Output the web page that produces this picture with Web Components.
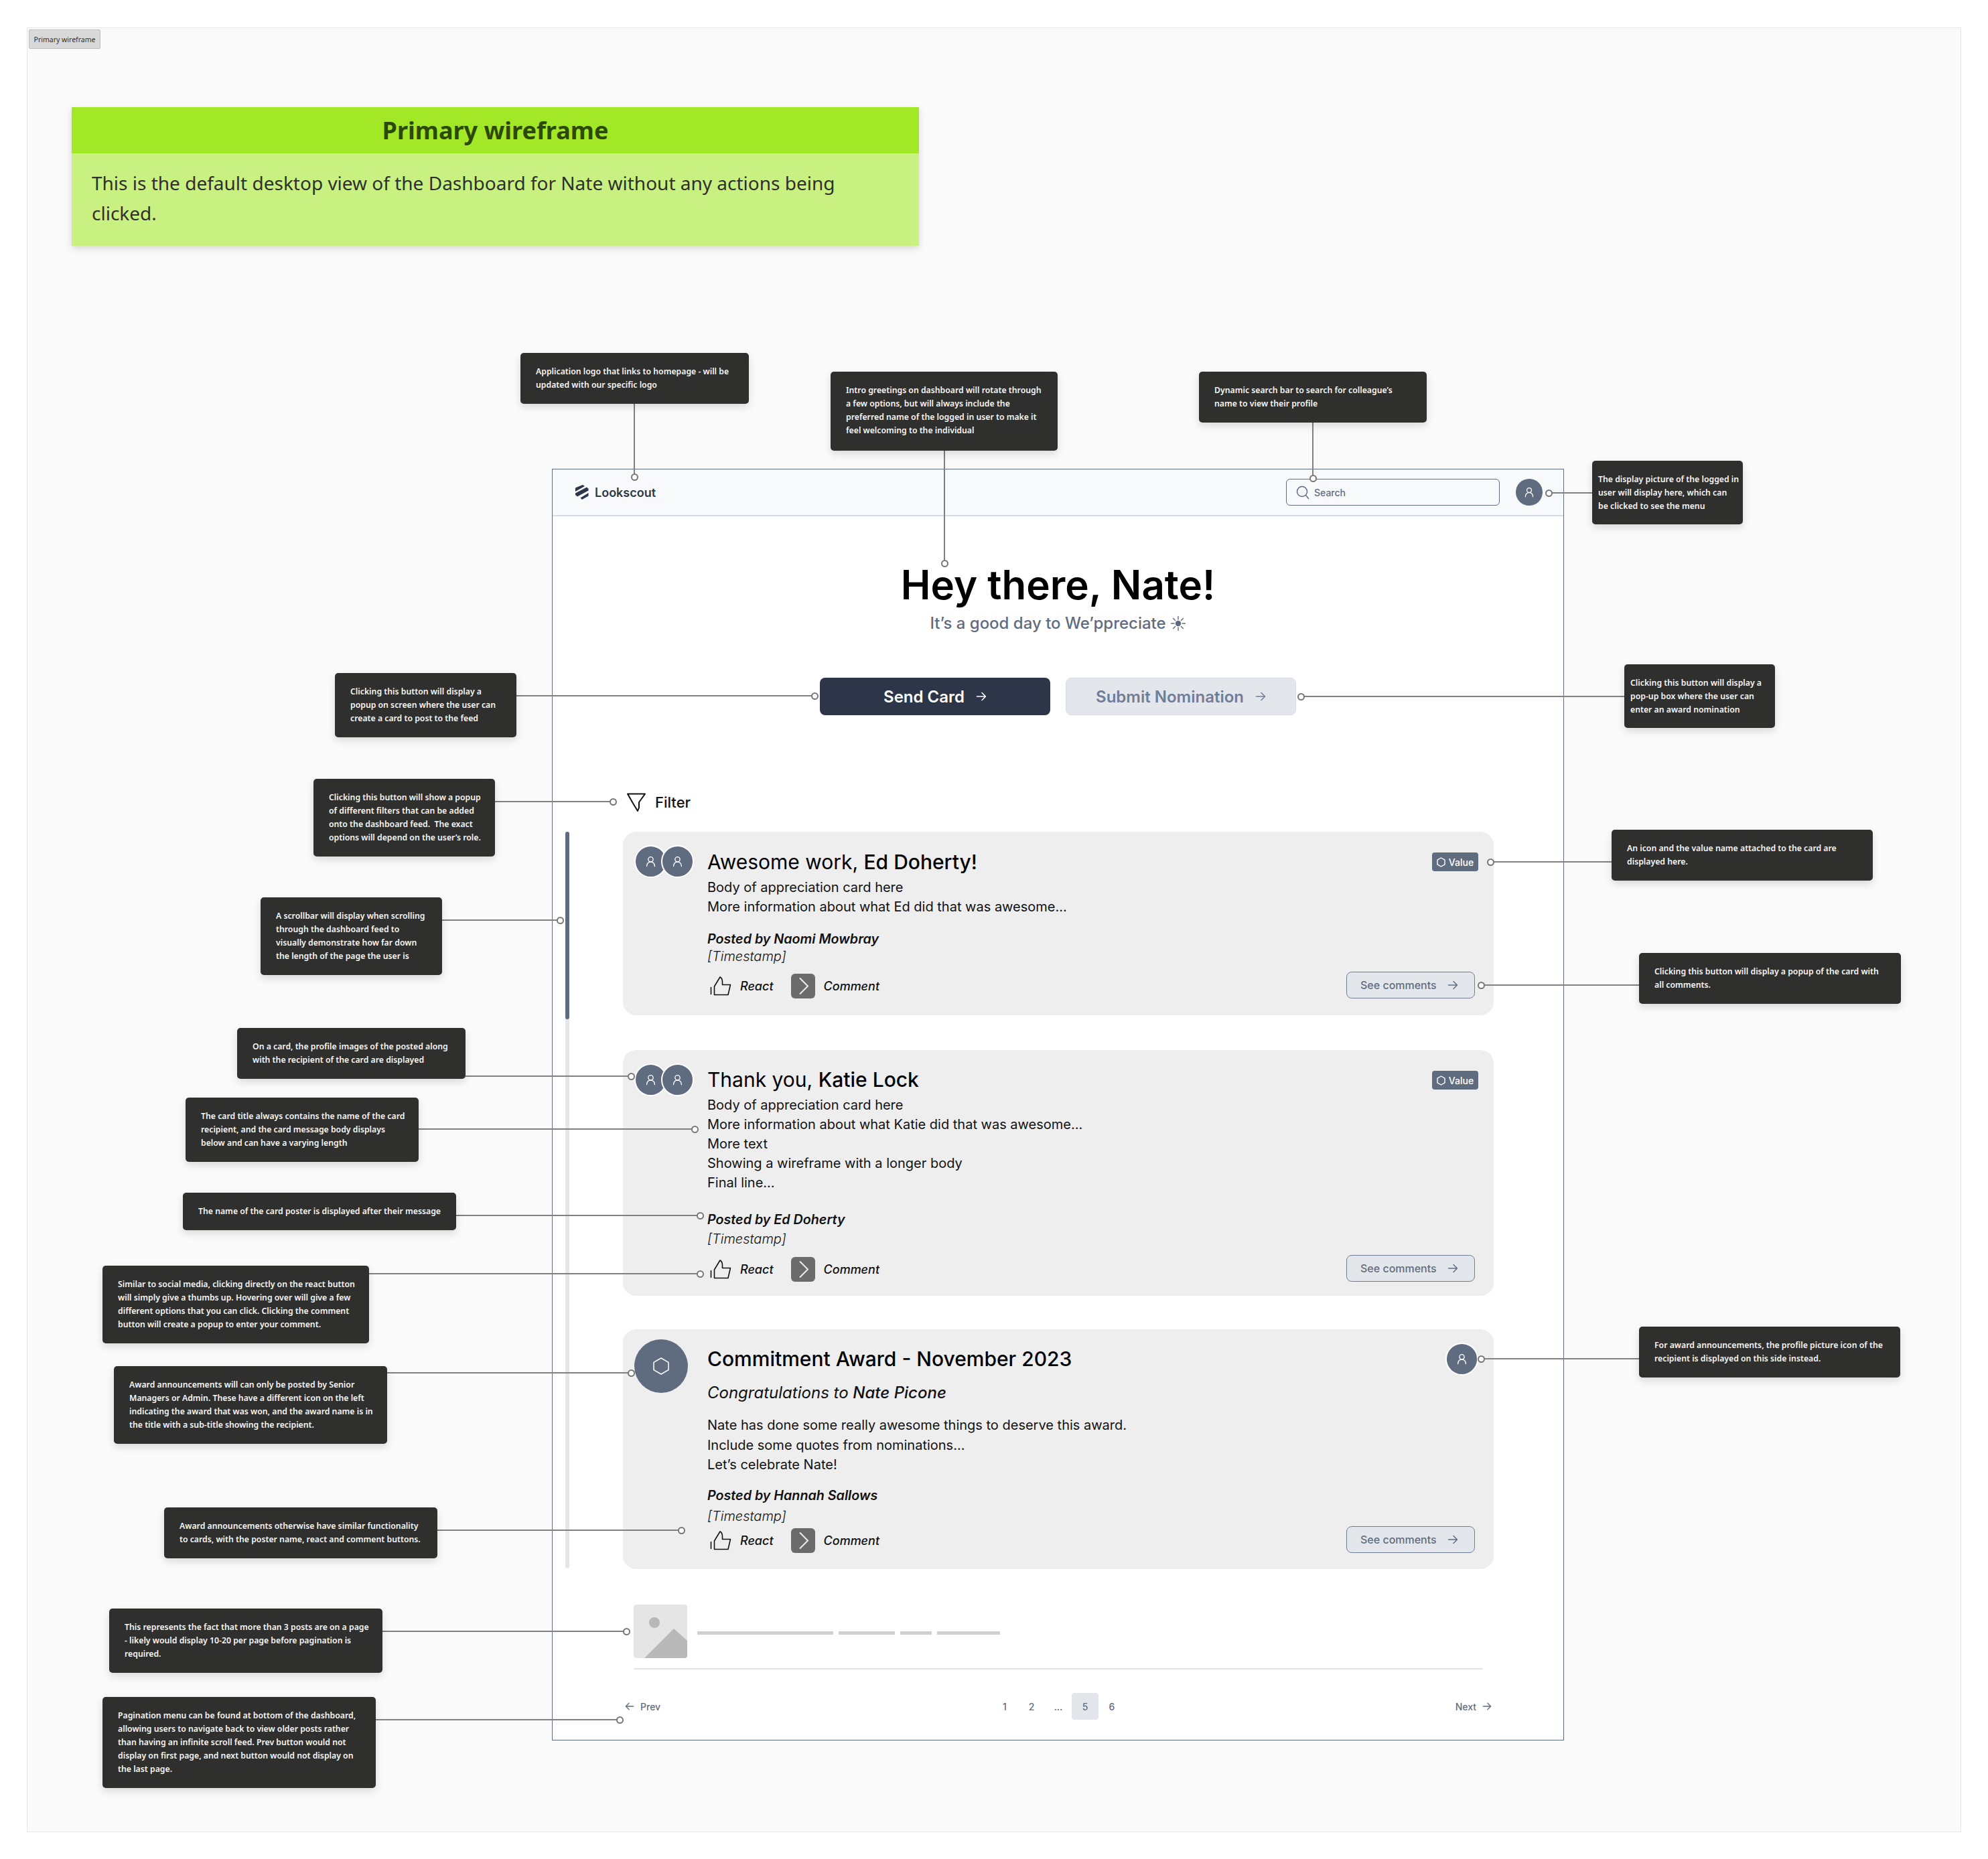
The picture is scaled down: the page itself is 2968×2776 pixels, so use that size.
<!DOCTYPE html>
<html lang="en"><head><meta charset="utf-8"><title>Primary wireframe</title>
<style>
html,body{margin:0;padding:0;background:#fff}
body{font-family:"Inter","Liberation Sans",sans-serif;width:2968px;height:2776px;overflow:hidden}
strong{font-weight:500}
</style></head>
<body>
<script>
function def(name, html, init){
  const t=document.createElement('template');t.innerHTML=html;
  customElements.define(name,class extends HTMLElement{
    constructor(){super();this.attachShadow({mode:'open'}).appendChild(t.content.cloneNode(true));}
    connectedCallback(){ if(init) init(this); }
  });
}
const ARROW='<svg width="16" height="16" viewBox="0 0 16 16" fill="none" stroke="currentColor" stroke-width="1.5" stroke-linecap="round" stroke-linejoin="round"><path d="M1.5 8h13M9 2.5 14.5 8 9 13.5"/></svg>';
const PERSON='<svg viewBox="0 0 24 24" fill="none" stroke="#fff" stroke-width="1.7" stroke-linecap="round"><circle cx="12" cy="8" r="4.6"/><path d="M4.5 21c.3-5 3-8.2 7.500-8.200s7.200 3.200 7.500 8.200"/></svg>';

def('a-board',`<style>:host{display:block;position:relative;width:2968px;height:2776px;overflow:hidden}
.f{position:absolute;left:40px;top:41px;width:2888px;height:2695px;box-sizing:border-box;background:#fafafa;border:1px solid #e6e6e6}</style><div class="f"></div><slot></slot>`);

def('a-tag',`<style>:host{position:absolute;left:43px;top:44px;width:107px;height:29px;box-sizing:border-box;display:flex;align-items:center;justify-content:center;background:#d9d9d9;border:1px solid #bdbdbd;border-radius:2px;font:400 10.5px "Noto Sans",sans-serif;color:#2f2f2d;white-space:nowrap;overflow:hidden}</style><slot></slot>`);

def('a-banner',`<style>:host{position:absolute;left:107px;top:160px;width:1265px;display:block;box-shadow:0 4px 10px rgba(0,0,0,.14);font-family:"Noto Sans",sans-serif}
.h{height:69px;background:#a3e827;display:flex;align-items:center;justify-content:center;font-size:36px;font-weight:700;color:#2c4a06}
.b{height:138px;box-sizing:border-box;background:#c9f181;padding:22px 30px 0;font-size:28px;line-height:45px;color:#2f2f2d}</style>
<div class="h"><slot name="head"></slot></div><div class="b"><slot></slot></div>`);

def('a-note',`<style>:host{position:absolute;left:var(--x);top:var(--y);width:var(--w);height:var(--h);box-sizing:border-box;padding:18px var(--p,23px);background:#2f2f2d;border-radius:5px;box-shadow:0 5px 12px rgba(0,0,0,.13);color:#f6f6f6;font:600 12.25px/20px "Noto Sans",sans-serif;white-space:nowrap;z-index:3}</style><slot></slot>`);

def('a-wire',`<style>:host{position:absolute;display:block;background:#808080;z-index:2}
:host([dir-r]){left:var(--a);width:calc(var(--b) - var(--a));top:calc(var(--y) - 1px);height:2px}
:host([dir-l]){left:var(--a);width:calc(var(--b) - var(--a));top:calc(var(--y) - 1px);height:2px}
:host([dir-v]){left:calc(var(--y) - 1px);top:var(--a);height:calc(var(--b) - var(--a));width:2px}
i{position:absolute;width:11px;height:11px;box-sizing:border-box;border:2px solid #777;border-radius:50%;background:#fff}
:host([dir-r]) i{right:-5.5px;top:-4.5px}
:host([dir-l]) i{left:-5.5px;top:-4.5px}
:host([dir-v]) i{bottom:-5.5px;left:-4.5px}</style><i></i>`);

def('a-frame',`<style>:host{position:absolute;left:824px;top:700px;width:1511px;height:1899px;box-sizing:border-box;display:flex;flex-direction:column;background:#fff;border:1px solid #5f6c7f;z-index:1;font-family:"Inter","Liberation Sans",sans-serif}</style><slot></slot>`);

def('a-logo',`<style>:host{display:flex;align-items:center;gap:9px;font:600 18px "Inter",sans-serif;color:#2d3648}svg{display:block}</style>
<svg width="20" height="22" viewBox="0 0 20 22" fill="#2d3648"><path d="M0 4.500 11 0l3 2L0 10zM0 12.500 17 3.500 19.500 6v2.500L3 17.500 0 15zM7.500 19.500 19.500 12v4.500L10 22z"/></svg><span><slot></slot></span>`);

def('a-search',`<style>:host{display:flex;align-items:center;gap:7px;width:319px;height:40px;box-sizing:border-box;padding-left:14px;border:1px solid #5f6c7f;border-radius:6px;background:#f8f9fb;font:500 14px "Inter",sans-serif;color:#5f6c7f}svg{display:block}</style>
<svg width="20" height="22" viewBox="0 0 20 22" fill="none" stroke="#5f6c7f" stroke-width="1.500" stroke-linecap="round"><circle cx="9" cy="10" r="7.500"/><path d="m14.500 15.500 4 5"/></svg><span><slot></slot></span>`);

def('a-avatar',`<style>:host{display:flex;align-items:center;justify-content:center;width:var(--s,49px);height:var(--s,49px);box-sizing:border-box;border-radius:50%;background:#5f6c7f;border:var(--bw,2px) solid #fff;flex:none}svg{width:var(--i,19px);height:var(--i,19px);display:block}</style>${PERSON}`);

def('a-topbar',`<style>:host{height:70px;flex:none;box-sizing:border-box;display:flex;align-items:center;background:#f8f9fb;border-bottom:2px solid #d5dbe5;padding:0 31px 0 34px}
.s{flex:1}::slotted(a-avatar){margin-left:24px}</style><slot name="left"></slot><div class="s"></div><slot></slot>`);

def('a-hero',`<style>:host{display:block;text-align:center;margin-top:66px;flex:none}
.h{font:600 60px/72px "Inter",sans-serif;color:#000}.s{font:500 24px/44px "Inter",sans-serif;color:#5f6c7f;display:flex;justify-content:center;align-items:center;gap:6px}</style>
<div class="h"><slot name="head"></slot></div><div class="s"><span><slot></slot></span>
<svg width="24" height="24" viewBox="0 0 24 24" fill="#5f6c7f" stroke="#5f6c7f" stroke-width="1.400" stroke-linecap="round"><circle cx="12" cy="12" r="3.500"/><path d="M12 1.500v4.500M12 18v4.500M1.500 12H6M18 12h4.500M4.600 4.600l3 3M16.400 16.400l3 3M19.400 4.600l-3 3M7.600 16.400l-3 3"/></svg></div>`);

def('a-actionbar',`<style>:host{display:flex;justify-content:center;gap:23px;margin-top:59px;flex:none}</style><slot></slot>`);
def('a-btn',`<style>:host{display:flex;align-items:center;justify-content:center;gap:17px;width:344px;height:56px;box-sizing:border-box;border-radius:8px;font:600 24px "Inter",sans-serif;background:#2d3648;color:#fff}
:host([soft]){background:#e3e7ec;color:#717d96;border:1px solid #d8dde4}svg{display:block}</style><span><slot></slot></span>${ARROW}`);

def('a-filter',`<style>:host{display:flex;align-items:center;gap:14px;height:28px;margin:116px 0 0 111px;font:500 22px "Inter",sans-serif;color:#111;flex:none}svg{display:block}</style>
<svg width="28" height="28" viewBox="0 0 28 28" fill="none" stroke="#111" stroke-width="2" stroke-linejoin="round"><path d="M1 1.500h26L18 14v8l-2 5-7-11.500z"/></svg><span><slot></slot></span>`);

def('a-feed',`<style>:host{display:flex;gap:80px;margin:30px 0 0 19px;flex:none}
.t{width:6px;flex:none;border-radius:3px;background:#e3e7ec;margin-bottom:1px}.th{height:280px;border-radius:3px;background:#5f6c7f}
.c{width:1300px}</style><div class="t"><div class="th"></div></div><div class="c"><slot></slot></div>`);

def('a-thumb',`<style>:host{display:block;flex:none}svg{display:block}</style><svg width="32" height="29" viewBox="0 0 32 29" fill="none" stroke="#111" stroke-width="1.600" stroke-linejoin="round" stroke-linecap="round"><path d="M1.500 16.500v10M6.500 15 15 1c2.500 1.500 3.500 4 3.500 7v4.500h12L27 27.500H6.500z"/></svg>`);

def('a-post',`<style>:host{display:flex;background:#eee;border-radius:20px;margin-top:var(--mt,0);font-family:"Inter",sans-serif;color:#111}
.l{width:109px;margin-left:17px;flex:none;padding-top:var(--lt,20px);box-sizing:content-box}
.m{flex:1;padding-top:var(--t,25px);padding-bottom:var(--pb,25px)}
.title{font-size:30px;line-height:40px;font-weight:400;color:#000}
:host([award]) .title{font-weight:500}
.sub{display:none;font-size:24px;line-height:36px;font-style:italic;margin-top:13px}
:host([award]) .sub{display:block}
.body{font-size:20px;line-height:var(--lh,29px);margin-top:var(--bg,3.500px);white-space:pre-line}
.by{font-size:19.700px;line-height:26px;font-style:italic;font-weight:600;margin-top:var(--byg,20.500px)}
.stamp{font-size:20px;line-height:26px;font-style:italic;font-weight:300;margin-top:var(--sg,0)}
.acts{display:flex;align-items:center;height:38px;margin-top:var(--ag,12px);margin-left:4px;font-size:18px;font-style:italic;font-weight:500}
.acts span{margin:0 26px 0 13px}.acts span:last-child{margin-right:0}svg{display:block}
.a{flex:none;display:flex;flex-direction:column;align-items:flex-end;justify-content:space-between;padding:var(--at,31px) 23px var(--pb,25px) 0}
.see{display:flex;align-items:center;gap:16px;width:192px;height:40px;box-sizing:border-box;padding-left:20px;margin-right:5px;background:#e3e7ec;border:1px solid #717d96;border-radius:8px;font-size:16px;font-weight:500;color:#5f6c7f}</style>
<div class="l"><slot name="lead"></slot></div>
<div class="m"><div class="title"><slot name="title"></slot></div><div class="sub"><slot name="sub"></slot></div>
<div class="body"><slot name="body"></slot></div><div class="by"><slot name="by"></slot></div><div class="stamp"><slot name="stamp"></slot></div>
<div class="acts"><a-thumb></a-thumb><span>React</span>
<svg width="36" height="37" viewBox="0 0 36 37"><rect width="36" height="37" rx="6" fill="#6b6b6b"/><path d="M13 6.500 25 18.500 13 30.500" fill="none" stroke="#eee" stroke-width="2"/></svg><span>Comment</span></div></div>
<div class="a"><slot name="top"></slot><div class="see"><span>See comments</span>${ARROW}</div></div>`);

def('a-pair',`<style>:host{display:flex}::slotted(a-avatar:last-child){margin-left:-9px}</style><slot></slot>`);

def('a-value',`<style>:host{display:flex;align-items:center;justify-content:center;gap:5px;width:69px;height:28px;border-radius:4px;background:#5f6c7f;color:#fff;font:500 14px "Inter",sans-serif}svg{display:block}</style>
<svg width="13" height="15" viewBox="0 0 13 15" fill="none" stroke="#fff" stroke-width="1.400"><path d="M6.500 1 12 4.200v6.600L6.500 14 1 10.800V4.200z"/></svg><span><slot></slot></span>`);

def('a-medal',`<style>:host{display:flex;align-items:center;justify-content:center;width:80px;height:80px;border-radius:50%;background:#5f6c7f}svg{display:block}</style>
<svg width="24" height="26" viewBox="0 0 24 26" fill="none" stroke="#fff" stroke-width="1.500" stroke-linejoin="round"><path d="M12 1 23 7.300v11.400L12 25 1 18.700V7.300z"/></svg>`);

def('a-more',`<style>:host{display:flex;align-items:center;gap:15px;margin:53px 0 0 121px;flex:none}
.p{width:80px;height:80px;flex:none;display:block}
.bars{display:flex;gap:8px;margin-top:4px}.bars i{height:5px;background:#cfcfcf;display:block}</style>
<svg class="p" viewBox="0 0 80 80"><rect width="80" height="80" rx="4" fill="#e5e5e5"/><circle cx="31" cy="27" r="8" fill="#b8b8b8"/><path d="M16 80 60 36l20 18v22a4 4 0 0 1-4 4z" fill="#b8b8b8"/></svg>
<div class="bars"><i style="width:203px"></i><i style="width:84px"></i><i style="width:47px"></i><i style="width:94px"></i></div>`);

def('a-rule',`<style>:host{display:block;width:1268px;height:2px;background:#e2e2e2;margin:15px 0 0 121px;flex:none}</style>`);

def('a-pager',`<style>:host{display:grid;grid-template-columns:1fr auto 1fr;align-items:center;margin:35px 107px 0 108px;height:40px;font:500 14px "Inter",sans-serif;color:#5f6c7f;flex:none}
.e{display:flex;align-items:center;gap:9px}.e.r{justify-content:flex-end}.n{display:flex}
.n span{width:40px;height:40px;display:flex;align-items:center;justify-content:center;border-radius:4px}.n .on{background:#e3e7ec}svg{display:block}</style>
<div class="e"><svg width="14" height="14" viewBox="0 0 16 16" fill="none" stroke="currentColor" stroke-width="1.500" stroke-linecap="round" stroke-linejoin="round"><path d="M14.500 8h-13M7 2.500 1.500 8 7 13.500"/></svg><span>Prev</span></div>
<div class="n"><span>1</span><span>2</span><span>...</span><span class="on">5</span><span>6</span></div>
<div class="e r"><span>Next</span><svg width="14" height="14" viewBox="0 0 16 16" fill="none" stroke="currentColor" stroke-width="1.500" stroke-linecap="round" stroke-linejoin="round"><path d="M1.500 8h13M9 2.500 14.500 8 9 13.500"/></svg></div>`);
</script>

<a-board>
  <a-tag>Primary wireframe</a-tag>
  <a-banner><span slot="head">Primary wireframe</span>This is the default desktop view of the Dashboard for Nate without any actions being<br>clicked.</a-banner>

  <a-frame>
    <a-topbar><a-logo slot="left">Lookscout</a-logo><a-search>Search</a-search><a-avatar style="--s:40px;--bw:0px;--i:18px"></a-avatar></a-topbar>
    <a-hero><span slot="head">Hey there, Nate!</span>It’s a good day to We’ppreciate</a-hero>
    <a-actionbar><a-btn>Send Card</a-btn><a-btn soft>Submit Nomination</a-btn></a-actionbar>
    <a-filter>Filter</a-filter>
    <a-feed>
      <a-post>
        <a-pair slot="lead"><a-avatar></a-avatar><a-avatar></a-avatar></a-pair>
        <span slot="title">Awesome work, <strong>Ed Doherty!</strong></span>
        <span slot="body">Body of appreciation card here
More information about what Ed did that was awesome...</span>
        <span slot="by">Posted by Naomi Mowbray</span>
        <span slot="stamp">[Timestamp]</span>
        <a-value slot="top">Value</a-value>
      </a-post>
      <a-post style="--mt:52px;--t:24px;--byg:27.500px;--sg:3px;--ag:13px;--pb:21px">
        <a-pair slot="lead"><a-avatar></a-avatar><a-avatar></a-avatar></a-pair>
        <span slot="title">Thank you, <strong>Katie Lock</strong></span>
        <span slot="body">Body of appreciation card here
More information about what Katie did that was awesome...
More text
Showing a wireframe with a longer body
Final line...</span>
        <span slot="by">Posted by Ed Doherty</span>
        <span slot="stamp">[Timestamp]</span>
        <a-value slot="top">Value</a-value>
      </a-post>
      <a-post award style="--mt:50px;--t:24px;--lt:15px;--at:20px;--bg:16px;--lh:29.500px;--byg:17.500px;--sg:5px;--ag:4px;--pb:24px">
        <a-medal slot="lead"></a-medal>
        <span slot="title">Commitment Award - November 2023</span>
        <span slot="sub">Congratulations to <strong>Nate Picone</strong></span>
        <span slot="body">Nate has done some really awesome things to deserve this award.
Include some quotes from nominations...
Let’s celebrate Nate!</span>
        <span slot="by">Posted by Hannah Sallows</span>
        <span slot="stamp">[Timestamp]</span>
        <a-avatar slot="top"></a-avatar>
      </a-post>
    </a-feed>
    <a-more></a-more>
    <a-rule></a-rule>
    <a-pager></a-pager>
  </a-frame>

  <a-wire dir-v style="--y:947px;--a:603px;--b:712px"></a-wire>
  <a-wire dir-v style="--y:1410px;--a:673px;--b:841px"></a-wire>
  <a-wire dir-v style="--y:1960px;--a:631px;--b:714px"></a-wire>
  <a-wire dir-r style="--y:1039px;--a:771px;--b:1216px"></a-wire>
  <a-wire dir-r style="--y:1197px;--a:739px;--b:915px"></a-wire>
  <a-wire dir-r style="--y:1374px;--a:660px;--b:836px"></a-wire>
  <a-wire dir-r style="--y:1607px;--a:695px;--b:942px"></a-wire>
  <a-wire dir-r style="--y:1686px;--a:625px;--b:1037px"></a-wire>
  <a-wire dir-r style="--y:1815px;--a:681px;--b:1045px"></a-wire>
  <a-wire dir-r style="--y:1902px;--a:551px;--b:1045px"></a-wire>
  <a-wire dir-r style="--y:2050px;--a:578px;--b:942px"></a-wire>
  <a-wire dir-r style="--y:2285px;--a:653px;--b:1017px"></a-wire>
  <a-wire dir-r style="--y:2436px;--a:571px;--b:935px"></a-wire>
  <a-wire dir-r style="--y:2568px;--a:561px;--b:925px"></a-wire>
  <a-wire dir-l style="--y:736px;--a:2312px;--b:2377px"></a-wire>
  <a-wire dir-l style="--y:1040px;--a:1942px;--b:2425px"></a-wire>
  <a-wire dir-l style="--y:1287px;--a:2225px;--b:2406px"></a-wire>
  <a-wire dir-l style="--y:1471px;--a:2211px;--b:2447px"></a-wire>
  <a-wire dir-l style="--y:2029px;--a:2211px;--b:2447px"></a-wire>

  <a-note style="--x:777px;--y:527px;--w:341px;--h:76px">Application logo that links to homepage - will be<br>updated with our specific logo</a-note>
  <a-note style="--x:1240px;--y:555px;--w:339px;--h:118px">Intro greetings on dashboard will rotate through<br>a few options, but will always include the<br>preferred name of the logged in user to make it<br>feel welcoming to the individual</a-note>
  <a-note style="--x:1790px;--y:555px;--w:340px;--h:76px">Dynamic search bar to search for colleague’s<br>name to view their profile</a-note>
  <a-note style="--x:2377px;--y:688px;--w:225px;--h:95px;--p:9px">The display picture of the logged in<br>user will display here, which can<br>be clicked to see the menu</a-note>
  <a-note style="--x:2425px;--y:992px;--w:225px;--h:95px;--p:9px">Clicking this button will display a<br>pop-up box where the user can<br>enter an award nomination</a-note>
  <a-note style="--x:500px;--y:1005px;--w:271px;--h:96px">Clicking this button will display a<br>popup on screen where the user can<br>create a card to post to the feed</a-note>
  <a-note style="--x:468px;--y:1163px;--w:271px;--h:116px">Clicking this button will show a popup<br>of different filters that can be added<br>onto the dashboard feed.&nbsp; The exact<br>options will depend on the user’s role.</a-note>
  <a-note style="--x:389px;--y:1340px;--w:271px;--h:116px">A scrollbar will display when scrolling<br>through the dashboard feed to<br>visually demonstrate how far down<br>the length of the page the user is</a-note>
  <a-note style="--x:354px;--y:1535px;--w:341px;--h:76px">On a card, the profile images of the posted along<br>with the recipient of the card are displayed</a-note>
  <a-note style="--x:277px;--y:1639px;--w:348px;--h:96px">The card title always contains the name of the card<br>recipient, and the card message body displays<br>below and can have a varying length</a-note>
  <a-note style="--x:273px;--y:1781px;--w:408px;--h:56px">The name of the card poster is displayed after their message</a-note>
  <a-note style="--x:153px;--y:1890px;--w:398px;--h:116px">Similar to social media, clicking directly on the react button<br>will simply give a thumbs up. Hovering over will give a few<br>different options that you can click. Clicking the comment<br>button will create a popup to enter your comment.</a-note>
  <a-note style="--x:170px;--y:2040px;--w:408px;--h:116px">Award announcements will can only be posted by Senior<br>Managers or Admin. These have a different icon on the left<br>indicating the award that was won, and the award name is in<br>the title with a sub-title showing the recipient.</a-note>
  <a-note style="--x:245px;--y:2251px;--w:408px;--h:76px">Award announcements otherwise have similar functionality<br>to cards, with the poster name, react and comment buttons.</a-note>
  <a-note style="--x:163px;--y:2402px;--w:408px;--h:96px">This represents the fact that more than 3 posts are on a page<br>- likely would display 10-20 per page before pagination is<br>required.</a-note>
  <a-note style="--x:153px;--y:2534px;--w:408px;--h:136px">Pagination menu can be found at bottom of the dashboard,<br>allowing users to navigate back to view older posts rather<br>than having an infinite scroll feed. Prev button would not<br>display on first page, and next button would not display on<br>the last page.</a-note>
  <a-note style="--x:2406px;--y:1239px;--w:390px;--h:76px">An icon and the value name attached to the card are<br>displayed here.</a-note>
  <a-note style="--x:2447px;--y:1423px;--w:391px;--h:76px">Clicking this button will display a popup of the card with<br>all comments.</a-note>
  <a-note style="--x:2447px;--y:1981px;--w:390px;--h:76px">For award announcements, the profile picture icon of the<br>recipient is displayed on this side instead.</a-note>
</a-board>
</body></html>
